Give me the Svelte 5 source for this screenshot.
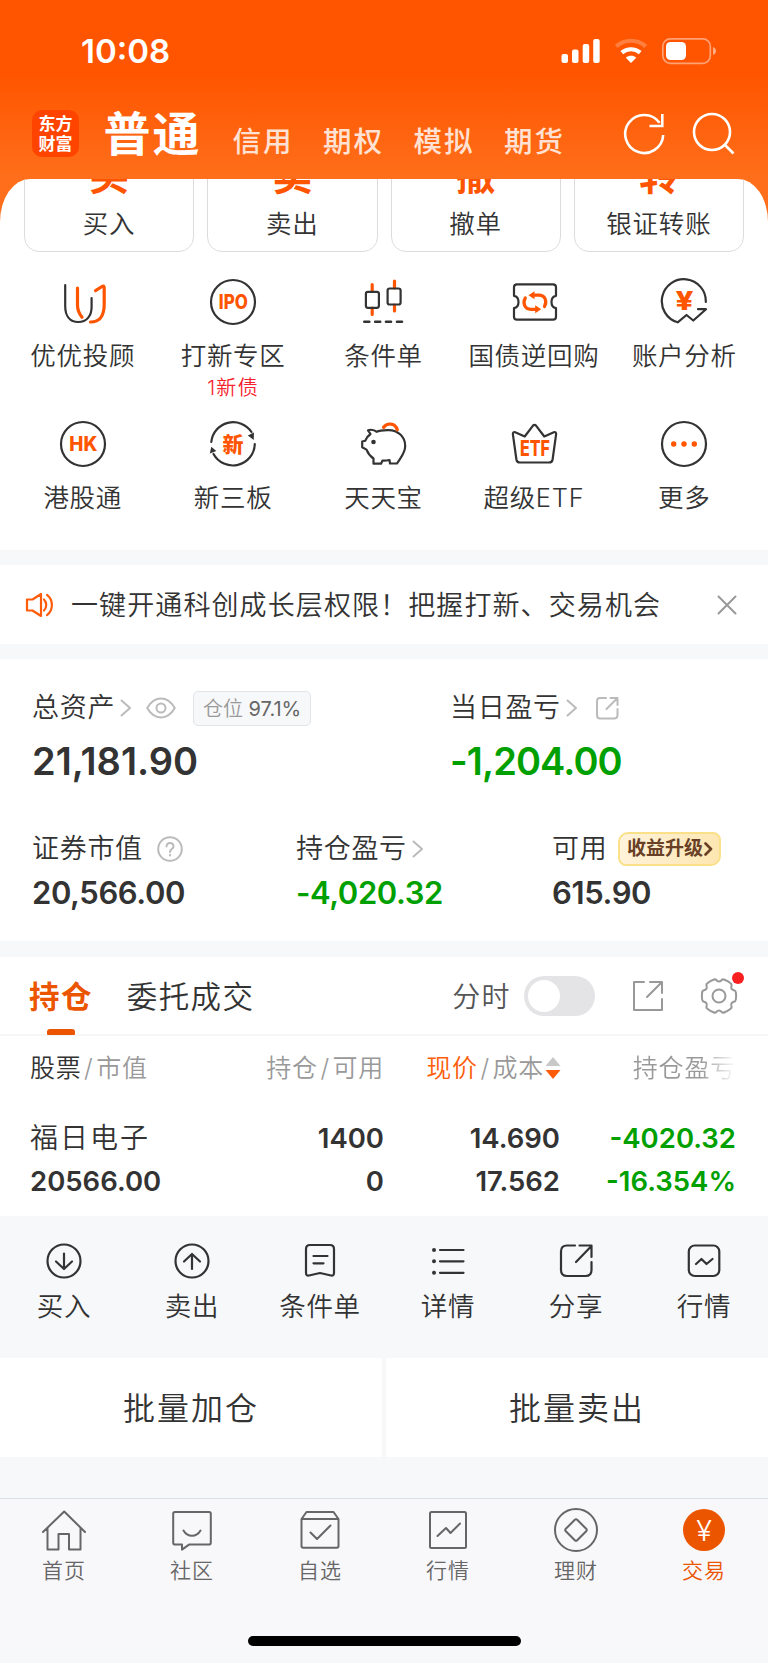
<script>
	let showMinutes = $state(false);
	let activeTab = $state('持仓');

	const accountTypes = ['信用', '期权', '模拟', '期货'];
	const quick = [
		{ glyph: '买', label: '买入' },
		{ glyph: '卖', label: '卖出' },
		{ glyph: '撤', label: '撤单' },
		{ glyph: '转', label: '银证转账' }
	];
	const features = [
		{ icon: 'uu', label: '优优投顾' },
		{ icon: 'ipo', label: '打新专区', note: '1新债' },
		{ icon: 'candle', label: '条件单' },
		{ icon: 'ticket', label: '国债逆回购' },
		{ icon: 'yuan', label: '账户分析' },
		{ icon: 'hk', label: '港股通' },
		{ icon: 'xin', label: '新三板' },
		{ icon: 'pig', label: '天天宝' },
		{ icon: 'etf', label: '超级ETF' },
		{ icon: 'more', label: '更多' }
	];
	const actions = [
		{ icon: 'down', label: '买入' },
		{ icon: 'up', label: '卖出' },
		{ icon: 'order', label: '条件单' },
		{ icon: 'list', label: '详情' },
		{ icon: 'share', label: '分享' },
		{ icon: 'quote', label: '行情' }
	];
	const nav = [
		{ icon: 'home', label: '首页' },
		{ icon: 'chat', label: '社区' },
		{ icon: 'box', label: '自选' },
		{ icon: 'chart', label: '行情' },
		{ icon: 'coin', label: '理财' },
		{ icon: 'trade', label: '交易', active: true }
	];

	// six lobes, each one flat on top with a shallow dip between
	function gearPath(cx, cy) {
		const at = (deg, r) => {
			const a = (deg * Math.PI) / 180;
			return (cx + r * Math.cos(a)).toFixed(2) + ' ' + (cy + r * Math.sin(a)).toFixed(2);
		};
		let d = 'M' + at(-11, 17.2);
		for (let i = 0; i < 6; i++) {
			const a = i * 60;
			d += 'Q' + at(a, 17.4) + ' ' + at(a + 11, 17.2);
			d += 'Q' + at(a + 18, 17.6) + ' ' + at(a + 21, 16);
			d += 'Q' + at(a + 30, 13.2) + ' ' + at(a + 39, 16);
			d += 'Q' + at(a + 42, 17.6) + ' ' + at(a + 49, 17.2);
		}
		return d + 'Z';
	}
</script>

{#snippet chevron()}
	<svg class="chevron" width="12" height="18" viewBox="0 0 12 18"><path d="M1.5 1.5 10 9l-8.500 7.500" /></svg>
{/snippet}

<div class="page">
	<header>
		<div class="status">
			<span class="time">10:08</span>
			<svg width="156" height="28" viewBox="0 0 156 28">
				<g fill="#fff">
					<rect x="1.500" y="17" width="6.500" height="9" rx="2" />
					<rect x="12" y="12.500" width="6.500" height="13.500" rx="2" />
					<rect x="22.700" y="7" width="6.500" height="19" rx="2" />
					<rect x="33.200" y="2" width="6.500" height="24" rx="2" />
					<path d="M71 26l-5.200-5.300c3-2.600 7.400-2.600 10.400 0z" />
					<rect x="106" y="5" width="20" height="18" rx="4.500" />
					<path d="M153 10c4 1.300 4 6.700 0 8z" opacity=".5" />
				</g>
				<path d="M61.800 15.700c5.300-4.600 13.100-4.600 18.400 0" fill="none" stroke="#fff" stroke-width="4.200" stroke-linecap="butt" />
				<path d="M56.300 9.300c8.500-7.400 20.900-7.400 29.400 0" fill="none" stroke="#fff" stroke-width="4.200" stroke-linecap="butt" opacity=".25" />
				<rect x="102.800" y="1.800" width="47.500" height="24.500" rx="7.500" fill="none" stroke="#fff" stroke-width="1.700" opacity=".45" />
			</svg>
		</div>
		<div class="titlebar">
			<div class="logo"><span>东方</span><span>财富</span></div>
			<h1>普通</h1>
			<div class="types">
				{#each accountTypes as type}
					<span>{type}</span>
				{/each}
			</div>
			<div class="tools">
				<svg width="44" height="44" viewBox="0 0 44 44">
					<path d="M40.200 23a19 19 0 1 1-3.600-12.200M39.300 2v12H26.500" />
				</svg>
				<svg width="44" height="44" viewBox="0 0 44 44">
					<circle cx="20" cy="20" r="18" /><path d="M33 33l8.500 8.500" />
				</svg>
			</div>
		</div>
	</header>

	<section class="sheet">
		<div class="quick">
			{#each quick as item}
				<div class="tile"><b>{item.glyph}</b><span>{item.label}</span></div>
			{/each}
		</div>
		<div class="features">
			{#each features as item}
				<div class="feature">
					<svg width="48" height="48" viewBox="0 0 48 48">
						{#if item.icon == 'uu'}
							<path d="M6.200 7v21c0 10 4.800 16 13.100 16S32.600 38 32.600 29V20" />
							<path class="hot" d="M18.500 10v17c0 6 1.500 8.500 4.500 12.300M36.500 12.700l6.500-4.200q2.200-1.200 2.200 1.300V26c0 12-4 17.800-13.700 18" />
						{:else if item.icon == 'ipo'}
							<circle cx="24" cy="24" r="22" />
							<text x="24.300" y="31.200" font-size="19.500" textLength="29" lengthAdjust="spacingAndGlyphs">IPO</text>
						{:else if item.icon == 'candle'}
							<path class="hot" d="M13.200 6.500v7M13.200 30v6.500M35.500 3v7M35.500 27v6" />
							<rect x="6.900" y="13.800" width="13" height="16" rx="2" /><rect x="28.600" y="10.500" width="13" height="16" rx="2" />
							<path d="M5.300 43.700h5M16.200 43.700h5M27 43.700h5M38 43.700h5" stroke-width="2.600" />
						{:else if item.icon == 'ticket'}
							<path d="M7 6.300h36q3 0 3 3v8.500c-6 1-6 11.400 0 12.400v8.500q0 3-3 3H7q-3 0-3-3v-8.500c6-1 6-11.400 0-12.400V9.300q0-3 3-3z" />
							<path class="hot" d="M15.300 20c-2.800 5.200-.8 11.300 5.700 11.300h5M34.500 28.500c2.800-5.200.8-11.300-5.700-11.300h-5" />
							<path class="fill" d="M24.500 13.200v8l-6-4zM25.200 27.300v8l6-4z" />
						{:else if item.icon == 'yuan'}
							<path d="M45.800 24A22 22 0 1 0 17.700 44.300L26.500 37l6.800 5.500L46 31.200h-8" />
							<text x="24.500" y="31.500" font-size="26" textLength="18" lengthAdjust="spacingAndGlyphs">¥</text>
						{:else if item.icon == 'hk'}
							<circle cx="24" cy="24" r="22" />
							<text x="24.300" y="31.200" font-size="20" textLength="28" lengthAdjust="spacingAndGlyphs">HK</text>
						{:else if item.icon == 'xin'}
							<path d="M2.300 22A22 22 0 0 1 42.500 12M45.800 24A22 22 0 0 1 4.500 34" />
							<path class="dark" d="M38.800 15.500l6.200-3-.3 7.500zM.8 33.500l1.500-6.800 5 4.300z" />
							<text x="24" y="31.500" font-size="21">新</text>
						{:else if item.icon == 'pig'}
							<path d="M9 10.300c2.500-.8 6.500-.3 8.500 1.500 3-1.500 7-1.800 12-1.700C39 10.300 46.200 16.500 46.200 26c0 7-4.200 11-8.200 17.500h-7l-.5-3.500q-3.500.8-7 .6L22 43.700h-7.500v-5.200C11.500 36.500 9 33.500 7.500 29.600L3.200 27.200V21.500l3-.7c1-2.700 2.800-5 5.300-6.800z" />
							<path class="hot" d="M24.500 7.500c3-4.500 11.500-5.500 13.800 2.300" />
							<circle class="dark" cx="14.500" cy="22" r="2.300" />
						{:else if item.icon == 'etf'}
							<path d="M22.800 5.800q1.700-2 3.400 0L34.300 16.500l9.500-4.200q2.700-.6 2.300 2L42.600 39.500q-.5 3-3.500 3H9.900q-3 0-3.500-3L2.900 14.300q-.4-2.600 2.300-2l9.500 4.200z" />
							<text x="25" y="36" font-size="21" textLength="30" lengthAdjust="spacingAndGlyphs">ETF</text>
						{:else}
							<circle cx="24" cy="24" r="22" />
							<g class="fill"><circle cx="13.700" cy="24" r="2.700" /><circle cx="24" cy="24" r="2.700" /><circle cx="34.300" cy="24" r="2.700" /></g>
						{/if}
					</svg>
					<span>{item.label}</span>
					{#if item.note}<small>{item.note}</small>{/if}
				</div>
			{/each}
		</div>
	</section>

	<section class="notice">
		<svg width="30" height="28" viewBox="0 0 30 28">
			<path d="M2 8.500h5.500L16 3v22l-8.500-5.500H2zM19 8.500c3 3 3 8 0 11M22 3.800c6.500 5 6.500 15.400 0 20.400" />
		</svg>
		<p>一键开通科创成长层权限！把握打新、交易机会</p>
		<svg class="close" width="20" height="20" viewBox="0 0 20 20"><path d="M1.500 1.500l17 17M18.500 1.500l-17 17" /></svg>
	</section>

	<section class="account">
		<div class="totals">
			<div class="item">
				<div class="label">
					总资产{@render chevron()}
					<svg class="line eye" width="30" height="22" viewBox="0 0 30 22">
						<path d="M1.200 11C5 4.500 10 1.500 15 1.500S25 4.500 28.800 11C25 17.500 20 20.500 15 20.500S5 17.500 1.200 11z" /><circle cx="15" cy="11" r="4.500" />
					</svg>
					<span class="tag">仓位 <em>97.1%</em></span>
				</div>
				<strong>21,181.90</strong>
			</div>
			<div class="item">
				<div class="label">
					当日盈亏{@render chevron()}
					<svg class="line out" width="24" height="24" viewBox="0 0 24 24">
						<path d="M11 2H5Q2 2 2 5v14q0 3.500 3 3.500h14q3.500 0 3.500-3.500v-6M11.500 13 22 2.500M15.500 2h7v7" />
					</svg>
				</div>
				<strong class="fall">-1,204.00</strong>
			</div>
		</div>
		<div class="details">
			<div class="item">
				<div class="label">
					证券市值
					<svg class="line help" width="26" height="26" viewBox="0 0 26 26">
						<circle cx="13" cy="13" r="11.800" /><path d="M9.500 10.500c0-4.800 7-4.600 7 0 0 2.500-3.500 2.700-3.500 5.500M13 18.800v.7" />
					</svg>
				</div>
				<strong>20,566.00</strong>
			</div>
			<div class="item">
				<div class="label">持仓盈亏{@render chevron()}</div>
				<strong class="fall">-4,020.32</strong>
			</div>
			<div class="item">
				<div class="label">可用<span class="badge">收益升级<svg width="9" height="14" viewBox="0 0 9 14"><path d="M1.500 1.500 7 7l-5.500 5.500" /></svg></span></div>
				<strong>615.90</strong>
			</div>
		</div>
	</section>

	<section class="holdings">
		<div class="tabs">
			{#each ['持仓', '委托成交'] as tab}
				<button class:active={activeTab == tab} onclick={() => (activeTab = tab)}>{tab}</button>
			{/each}
			<span class="minutes">分时</span>
			<button class="switch" class:on={showMinutes} aria-label="分时" onclick={() => (showMinutes = !showMinutes)}><i></i></button>
			<svg class="export" width="32" height="32" viewBox="0 0 32 32">
				<path d="M12 2H2v28h28V19M15 17 29.500 2.500M18 2h12v11" />
			</svg>
			<div class="settings">
				<svg width="38" height="38" viewBox="0 0 38 38"><path d={gearPath(19, 19)} /><circle cx="19" cy="19" r="6.500" /></svg>
				<i></i>
			</div>
		</div>
		<div class="row head">
			<div><span class="on">股票</span><s>/</s>市值</div>
			<div>持仓<s>/</s>可用</div>
			<div class="sort">
				<span class="hotText">现价</span><s>/</s>成本
				<svg width="16" height="22" viewBox="0 0 16 22"><path d="M8 0l7.500 9H.5z" fill="#c8c8c8" /><path d="M8 22l7.500-9H.5z" fill="#ff5c0a" /></svg>
			</div>
			<div class="fade">持仓盈亏</div>
		</div>
		<div class="row stock">
			<div><span>福日电子</span><b>20566.00</b></div>
			<div><b>1400</b><b>0</b></div>
			<div><b>14.690</b><b>17.562</b></div>
			<div class="fall"><b>-4020.32</b><b>-16.354%</b></div>
		</div>
	</section>

	<div class="actions">
		{#each actions as item}
			<div class="action">
				<svg width="36" height="36" viewBox="0 0 36 36">
					{#if item.icon == 'down'}
						<circle cx="18" cy="18" r="16.500" /><path d="M18 10.500v15M10 18.500l8 7.500 8-7.500" />
					{:else if item.icon == 'up'}
						<circle cx="18" cy="18" r="16.500" /><path d="M18 26V11M10 18.500 18 11l8 7.500" />
					{:else if item.icon == 'order'}
						<path d="M8 2h20q4 0 4 4v24q0 3-3 2.500L18 30 7 32.500q-3 .5-3-2.500V6q0-4 4-4zM11.500 13h14M11.500 20.300h10" />
					{:else if item.icon == 'list'}
						<path d="M10 7h23.500M10 18.300h23.500M10 29.800h23.500" />
						<path d="M4 7h.01M4 18.300h.01M4 29.800h.01" stroke-width="4" />
					{:else if item.icon == 'share'}
						<path d="M17 2.500H9q-6 0-6 6v18.500q0 6 6 6h18.500q6 0 6-6V19M18 19 33 3.500M21.500 2.500h12v11.500" />
					{:else}
						<rect x="2.800" y="2.500" width="30.500" height="30.500" rx="6" /><path d="M10 21l5.500-5 5 5 6-5" />
					{/if}
				</svg>
				<span>{item.label}</span>
			</div>
		{/each}
	</div>

	<div class="batch"><button>批量加仓</button><button>批量卖出</button></div>

	<nav>
		{#each nav as item}
			<div class="link" class:active={item.active}>
				<svg width="46" height="46" viewBox="0 0 46 46">
					{#if item.icon == 'home'}
						<path d="M2 25 23.200 4.500 44 25M6.500 21v21.500H17.500V27H28v15.500h11.500V21" />
					{:else if item.icon == 'chat'}
						<path d="M6 5h34q1.800 0 1.800 1.800v29q0 1.800-1.800 1.800H20l-7 5v-5H6q-1.800 0-1.800-1.800v-29Q4.200 5 6 5zM14.500 23.500c4 7 13 7 17 0" />
					{:else if item.icon == 'box'}
						<path d="M4.500 12 9.500 5h27l5 7v27q0 1.800-1.800 1.800H6.300q-1.800 0-1.800-1.800zM4.500 12h37M13.500 25.500l6.500 6.500 13.500-13.500" />
					{:else if item.icon == 'chart'}
						<rect x="5" y="5" width="36" height="36" rx="1.500" /><path d="M12.500 29l8.500-8 4.500 5L35 16.500" />
					{:else if item.icon == 'coin'}
						<circle cx="23" cy="23" r="21" /><path d="M21.800 12.800q1.200-1.200 2.400 0l9 9q1.200 1.200 0 2.400l-9 9q-1.200 1.200-2.400 0l-9-9q-1.200-1.200 0-2.400z" />
					{:else}
						<circle class="disc" cx="23" cy="23" r="21" /><text x="23" y="33.500" font-size="29">¥</text>
					{/if}
				</svg>
				<span>{item.label}</span>
			</div>
		{/each}
	</nav>
	<footer><i></i></footer>
</div>

<style>
	:global(body) {
		background:#f7f8fa;
	}
	.page {
		width:768px;
		height:1663px;
		overflow:hidden;
		display:flex;
		flex-direction:column;
		font-family:Inter, "Noto Sans CJK SC", sans-serif;
		font-weight:350;
		color:#333;
		background:#f7f8fa;
		background-image:linear-gradient(#ff5500 75px, #ff6e1a 175px, #ff6e1a);
		background-size:100% 260px;
		background-repeat:no-repeat;
	}
	.page > * {
		flex:none;
	}
	svg {
		display:block;
		flex:none;
		fill:none;
		stroke-linecap:round;
		stroke-linejoin:round;
	}
	button {
		font:inherit;
		letter-spacing:inherit;
		color:inherit;
		border:0;
		padding:0;
		background:none;
	}
	header {
		height:179px;
		color:#fff;
	}
	.status {
		height:88px;
		padding:13px 52px 0 81px;
		box-sizing:border-box;
		display:flex;
		justify-content:space-between;
		align-items:center;
	}
	.time {
		font-size:33px;
		font-weight:600;
		line-height:40px;
	}
	.titlebar {
		height:91px;
		padding:0 32px;
		display:flex;
		align-items:center;
	}
	.logo {
		width:47px;
		height:47px;
		border-radius:10px;
		background:#ff4400;
		display:flex;
		flex-direction:column;
		align-items:center;
		justify-content:center;
		font-size:17px;
		font-weight:700;
		line-height:20px;
	}
	h1 {
		margin:0 0 0 24.500px;
		font-size:47px;
		font-weight:700;
		line-height:60px;
		letter-spacing:2px;
	}
	.types {
		display:flex;
		gap:29.500px;
		margin:17px 0 0 31px;
		font-size:28.500px;
		font-weight:500;
		line-height:36px;
		letter-spacing:2px;
		color:#ffe2d3;
	}
	.tools {
		display:flex;
		gap:25px;
		margin-left:auto;
		stroke:#fff;
		stroke-width:2.600;
	}
	.tools svg {
		stroke-linecap:butt;
		stroke-linejoin:miter;
	}
	.sheet {
		height:371px;
		overflow:hidden;
		background:#fff;
		border-radius:30px 30px 0 0 / 43px 43px 0 0;
	}
	.quick {
		display:grid;
		grid-template-columns:repeat(4, 1fr);
		gap:13px;
		padding:0 24px;
		margin-top:-40px;
	}
	.tile {
		height:113px;
		box-sizing:border-box;
		border:1.500px solid #dcdcdc;
		border-radius:15px;
		display:flex;
		flex-direction:column;
		align-items:center;
		font-size:25.500px;
		letter-spacing:.800px;
	}
	.tile b {
		font-size:40px;
		line-height:40px;
		letter-spacing:0;
		color:#ff5500;
		margin:16px 0 13px;
	}
	.tile span {
		line-height:30px;
	}
	.features {
		display:grid;
		grid-template-columns:repeat(5, 1fr);
		grid-auto-rows:142px;
		padding:25.500px 8.500px 0 7.500px;
	}
	.feature {
		display:flex;
		flex-direction:column;
		align-items:center;
		font-size:25.500px;
		line-height:33px;
		letter-spacing:.700px;
	}
	.feature svg {
		stroke:#333;
		stroke-width:2.200;
		margin-bottom:13px;
	}
	.feature small {
		font-size:20px;
		letter-spacing:1.300px;
		color:#f5222d;
	}
	.hot {
		stroke:#ff5500;
		stroke-width:3.200;
	}
	.fill {
		fill:#ff5500;
		stroke:none;
	}
	.dark {
		fill:#333;
		stroke:none;
	}
	.feature text {
		fill:#ff5500;
		stroke:none;
		font-weight:800;
		letter-spacing:0;
		text-anchor:middle;
	}
	.notice {
		height:79px;
		margin:15px 0;
		padding:0 31px 0 25px;
		background:#fff;
		display:flex;
		align-items:center;
		stroke:#ff5c0a;
		stroke-width:2.200;
	}
	.notice p {
		flex:1;
		margin:2px 0 0 16px;
		font-size:27px;
		letter-spacing:1.100px;
		line-height:36px;
		white-space:nowrap;
	}
	.notice .close {
		stroke:#999;
		stroke-width:2;
	}
	.account {
		height:282px;
		background:#fff;
		box-sizing:border-box;
		padding:31px 32px 0;
	}
	.totals, .details {
		display:grid;
		grid-template-columns:418px 1fr;
	}
	.details {
		grid-template-columns:264px 256px 1fr;
		margin-top:48px;
	}
	.label {
		display:flex;
		align-items:center;
		height:36px;
		font-size:27px;
		line-height:36px;
		letter-spacing:.700px;
		white-space:nowrap;
	}
	.chevron {
		margin-left:5px;
		stroke:#bbb;
		stroke-width:2;
	}
	.line {
		stroke:#bbb;
		stroke-width:2;
	}
	.eye {
		margin-left:14px;
	}
	.out {
		margin-left:17px;
	}
	.help {
		margin-left:14px;
	}
	.tag {
		margin-left:17px;
		height:33px;
		width:116px;
		border:1px solid #e3e4e8;
		border-radius:5px;
		background:#f7f8fa;
		text-align:center;
		line-height:34px;
		font-size:20px;
		letter-spacing:0;
		color:#999;
	}
	.tag em {
		font-style:normal;
		font-weight:400;
		color:#666;
	}
	strong {
		display:block;
		font-weight:600;
	}
	.totals strong {
		font-size:38px;
		line-height:44px;
		margin-top:13px;
		letter-spacing:0;
	}
	.totals .fall {
		letter-spacing:-.900px;
	}
	.details strong {
		font-size:31px;
		line-height:36px;
		margin-top:8px;
		letter-spacing:-.400px;
	}
	.fall {
		color:#00a000;
	}
	.badge {
		margin-left:11px;
		width:103px;
		height:34px;
		box-sizing:border-box;
		border:2px solid #fbe08a;
		border-radius:10px 8px 10px 8px;
		background:linear-gradient(100deg, #fff3dc, #fde6b0);
		display:flex;
		align-items:center;
		justify-content:center;
		gap:1px;
		font-size:19px;
		line-height:30px;
		font-weight:700;
		letter-spacing:0;
		color:#693f25;
	}
	.badge svg {
		stroke:#693f25;
		stroke-width:2.600;
	}
	.holdings {
		height:259px;
		margin-top:16px;
		background:#fff;
	}
	.tabs {
		height:79px;
		box-sizing:border-box;
		border-bottom:2px solid #f5f6f8;
		padding:0 30px 0 29px;
		display:flex;
		align-items:center;
		font-size:30.500px;
		line-height:74px;
		letter-spacing:1.400px;
	}
	.tabs button {
		height:77px;
		padding-top:3px;
		margin-right:34px;
		position:relative;
	}
	.tabs .active {
		color:#ec5500;
		font-weight:700;
	}
	.tabs .active::after {
		content:"";
		position:absolute;
		left:18px;
		bottom:-1px;
		width:28px;
		height:6px;
		border-radius:3px 3px 1px 1px;
		background:#ec5500;
	}
	.minutes {
		margin-left:auto;
		padding-top:3px;
		font-size:28px;
		color:#555;
	}
	.tabs .switch {
		width:71px;
		height:40px;
		padding:0;
		margin:0 37px 0 13px;
		border-radius:20px;
		background:#e4e4e7;
	}
	.switch i {
		display:block;
		width:32px;
		height:32px;
		margin-left:4px;
		border-radius:50%;
		background:#fff;
	}
	.switch.on i {
		margin-left:35px;
	}
	.export, .settings {
		stroke:#999;
		stroke-width:2;
	}
	.settings {
		position:relative;
		margin-left:36px;
	}
	.settings i {
		position:absolute;
		top:-5px;
		right:-6px;
		width:12px;
		height:12px;
		border-radius:50%;
		background:#fa2020;
	}
	.row {
		display:grid;
		grid-template-columns:150px 204px 176px 176px;
		padding:0 32px 0 30px;
		text-align:right;
		white-space:nowrap;
	}
	.row > div:first-child {
		text-align:left;
	}
	.head {
		height:62px;
		line-height:64px;
		font-size:25px;
		letter-spacing:.800px;
		color:#999;
	}
	.head s {
		text-decoration:none;
		margin:0 2.500px;
	}
	.head .on {
		color:#333;
	}
	.hotText {
		color:#ff5c0a;
	}
	.sort {
		display:flex;
		align-items:center;
		justify-content:flex-end;
	}
	.sort svg {
		margin:0 -1px 0 1px;
	}
	.fade {
		color:transparent;
		background:linear-gradient(90deg, #999 80%, #fff) text;
	}
	.stock {
		margin-top:19px;
	}
	.stock div {
		display:flex;
		flex-direction:column;
		line-height:43px;
	}
	.stock span {
		font-size:28px;
		letter-spacing:2px;
	}
	.stock b {
		font-size:27.500px;
		font-weight:600;
		letter-spacing:0;
	}
	.actions {
		height:142px;
		box-sizing:border-box;
		padding-top:27px;
		display:grid;
		grid-template-columns:repeat(6, 1fr);
	}
	.action, .link {
		display:flex;
		flex-direction:column;
		align-items:center;
	}
	.action {
		font-size:26.500px;
		line-height:34px;
		letter-spacing:.700px;
	}
	.action svg {
		stroke:#333;
		stroke-width:2.200;
		margin-bottom:10px;
	}
	.batch {
		display:flex;
		gap:4px;
		height:99px;
	}
	.batch button {
		flex:1;
		padding-top:3px;
		background:#fff;
		font-size:32px;
		line-height:96px;
		letter-spacing:2px;
	}
	nav {
		margin-top:41px;
		height:112px;
		border-top:1px solid #dfe0e4;
		background:#f8f8fb;
		display:grid;
		grid-template-columns:repeat(6, 1fr);
		color:#666;
	}
	.link {
		padding-top:8px;
		font-size:21px;
		line-height:28px;
		letter-spacing:1px;
	}
	.link svg {
		stroke:#666;
		stroke-width:2;
		margin-bottom:4px;
	}
	.link.active {
		color:#ec5500;
	}
	.link .disc {
		fill:#ec5500;
		stroke:none;
	}
	.link text {
		fill:#fff;
		stroke:none;
		letter-spacing:0;
		text-anchor:middle;
	}
	footer {
		flex:1;
		background:#f8f8fb;
		display:flex;
		justify-content:center;
	}
	footer i {
		width:273px;
		height:10px;
		margin-top:25px;
		border-radius:5px;
		background:#000;
	}
</style>
